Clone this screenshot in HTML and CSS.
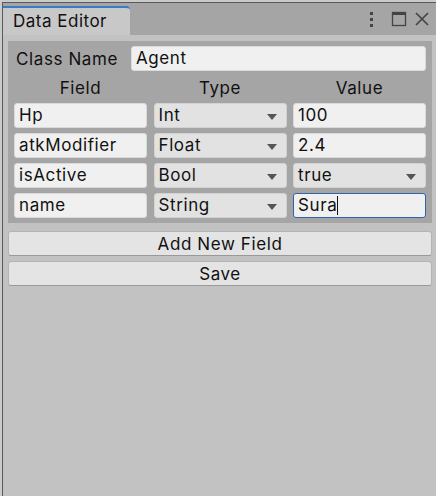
FILE: index.html
```html
<!DOCTYPE html>
<html>
<head>
<meta charset="utf-8">
<link rel="stylesheet" href="styles.css">
</head>
<body>
<div class="window">
  <div class="titlebar">
    <div class="tab">Data Editor</div>
    <div class="tools">
      <svg class="ico kebab" width="8" height="16" viewBox="0 0 8 16"><rect x="3" y="1" width="3" height="3" fill="#444"/><rect x="3" y="7" width="3" height="3" fill="#444"/><rect x="3" y="13" width="3" height="3" fill="#444"/></svg>
      <svg class="ico" width="16" height="16" viewBox="0 0 16 16"><rect x="1.5" y="1.5" width="13" height="13" fill="none" stroke="#444" stroke-width="1.3"/><rect x="1" y="1" width="14" height="3" fill="#444"/></svg>
      <svg class="ico" width="16" height="16" viewBox="0 0 16 16"><path d="M2 2 L14 14 M14 2 L2 14" stroke="#444" stroke-width="1.7" fill="none"/></svg>
    </div>
  </div>
  <div class="content">
    <div class="box">
      <div class="classrow">
        <span class="label">Class Name</span>
        <div class="input wide">Agent</div>
      </div>
      <div class="grid">
        <div class="head">Field</div>
        <div class="head">Type</div>
        <div class="head">Value</div>

        <div class="input">Hp</div>
        <div class="drop">Int<span class="arrow"></span></div>
        <div class="input">100</div>

        <div class="input">atkModifier</div>
        <div class="drop">Float<span class="arrow"></span></div>
        <div class="input">2.4</div>

        <div class="input">isActive</div>
        <div class="drop">Bool<span class="arrow"></span></div>
        <div class="drop">true<span class="arrow"></span></div>

        <div class="input">name</div>
        <div class="drop">String<span class="arrow"></span></div>
        <div class="input focus">Sura<span class="caret"></span></div>
      </div>
    </div>
    <div class="btn first">Add New Field</div>
    <div class="btn">Save</div>
  </div>
</div>
</body>
</html>
```
FILE: styles.css
```css
html, body {
  margin: 0;
  padding: 0;
  background: #c2c2c2;
  font-family: Inter, "Noto Sans", sans-serif;
  font-size: 17px;
  color: #111;
}
body {
  padding-top: 2px;
  padding-left: 2px;
  height: 494px;
  overflow: hidden;
  background: #cbcbcb;
}
.window {
  border-top: 1px solid #5a5a5a;
  border-left: 1px solid #5a5a5a;
  background: #c2c2c2;
  height: 493px;
}
.titlebar {
  height: 32px;
  background: #a5a5a5;
  display: flex;
  align-items: flex-end;
  justify-content: space-between;
}
.tab {
  width: 117px;
  height: 27px;
  background: #c8c8c8;
  border-top: 2px solid #3a7ac8;
  border-top-right-radius: 4px;
  padding-left: 10px;
  line-height: 26px;
  letter-spacing: 0.5px;
}
.tools {
  align-self: flex-start;
  display: flex;
  gap: 7px;
  padding-top: 8px;
  padding-right: 6px;
}
.ico { display: block; }
.kebab { margin-right: 9px; }
.content {
  padding: 6px 4px 0 5px;
}
.box {
  background: #a5a5a5;
  padding: 5px 6px 5px 6px;
}
.classrow {
  display: flex;
  align-items: center;
  height: 25px;
}
.label {
  width: 115px;
  padding-left: 2px;
  letter-spacing: 0.6px;
}
.input, .drop {
  height: 25px;
  box-sizing: border-box;
  border-radius: 3px;
  line-height: 23px;
  padding-left: 4px;
  white-space: nowrap;
  overflow: hidden;
  letter-spacing: 0.6px;
}
.input {
  background: #f0f0f0;
  border: 1px solid #dadada;
}
.wide { flex: 1; }
.drop {
  background: #e2e2e2;
  border: 1px solid #d2d2d2;
  position: relative;
}
.arrow {
  position: absolute;
  right: 9px;
  top: 10px;
  width: 0;
  height: 0;
  border-left: 5px solid transparent;
  border-right: 5px solid transparent;
  border-top: 6px solid #555;
}
.focus {
  border: 1px solid #2f64a8;
}
.caret {
  display: inline-block;
  width: 1px;
  height: 19px;
  background: #111;
  vertical-align: -4px;
}
.grid {
  display: grid;
  grid-template-columns: 133px 133px 133px;
  column-gap: 6.5px;
  row-gap: 5px;
  padding-top: 5px;
}
.head {
  text-align: center;
  height: 22px;
  line-height: 24px;
  letter-spacing: 0.6px;
}
.btn {
  height: 25px;
  box-sizing: border-box;
  background: #e4e4e4;
  border: 1px solid #b4b4b4;
  border-bottom-color: #999;
  border-radius: 3px;
  text-align: center;
  line-height: 24px;
  margin-top: 5px;
  letter-spacing: 0.6px;
}
.btn.first { margin-top: 8px; }
```
